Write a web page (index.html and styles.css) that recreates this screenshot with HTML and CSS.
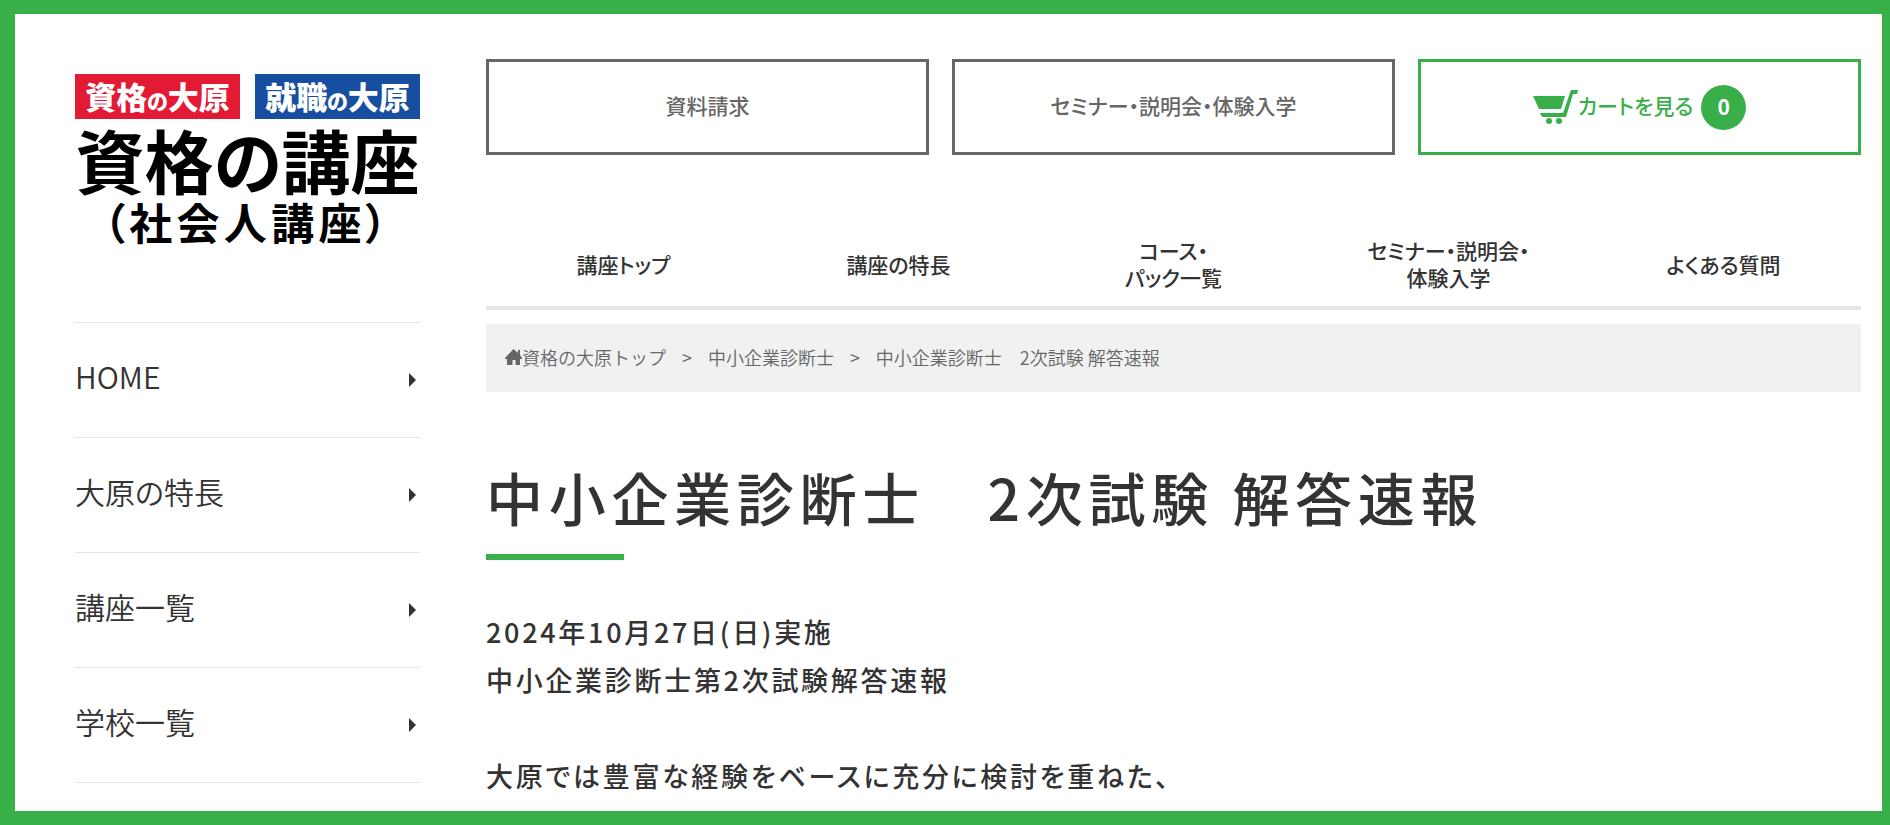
FILE: index.html
```html
<!DOCTYPE html>
<html lang="ja">
<head>
<meta charset="utf-8">
<meta name="viewport" content="width=device-width, initial-scale=1">
<title>中小企業診断士 2次試験 解答速報</title>
<link rel="stylesheet" href="styles.css">
</head>
<body>
<div class="page">
  <aside class="sidebar">
    <a class="logo" href="#">
      <span class="logo-tags">
        <span class="tag tag-red">資格<small>の</small>大原</span>
        <span class="tag tag-blue">就職<small>の</small>大原</span>
      </span>
      <span class="logo-name">資格の講座</span>
      <span class="logo-sub">（社会人講座）</span>
    </a>
    <nav class="side-nav">
      <a href="#"><span>HOME</span><i class="arrow"></i></a>
      <a href="#"><span>大原の特長</span><i class="arrow"></i></a>
      <a href="#"><span>講座一覧</span><i class="arrow"></i></a>
      <a href="#"><span>学校一覧</span><i class="arrow"></i></a>
    </nav>
  </aside>
  <main class="main">
    <div class="actions">
      <a class="action" href="#"><span class="label">資料請求</span></a>
      <a class="action" href="#"><span class="label">セミナー・説明会・体験入学</span></a>
      <a class="action action-cart" href="#">
        <svg class="cart" viewBox="0 0 45 35" aria-hidden="true">
          <path d="M0 6h32l-4 13H6z"/>
          <path d="M38 0h7l-1 4h-4l-7 23H9l-2-4h23z"/>
          <circle cx="16" cy="31" r="3"/><circle cx="26" cy="31" r="3"/>
        </svg>
        <span class="label">カートを見る</span>
        <span class="count">0</span>
      </a>
    </div>
    <nav class="course-nav">
      <a href="#">講座トップ</a>
      <a href="#">講座の特長</a>
      <a href="#">コース・<br>パック一覧</a>
      <a href="#">セミナー・説明会・<br>体験入学</a>
      <a href="#">よくある質問</a>
    </nav>
    <nav class="crumbs">
      <a class="crumb-home" href="#"><svg class="home" viewBox="0 0 17 16" aria-hidden="true"><path d="M0 9l8.500-9L13 4V1h2v5l2 3v1h-2v6h-4.500v-5h-3v5H2v-6H0z"/></svg>資格の大原トップ</a>
      <span>&gt;</span>
      <a href="#">中小企業診断士</a>
      <span>&gt;</span>
      <span>中小企業診断士　2次試験 解答速報</span>
    </nav>
    <article>
      <h1 class="title">中小企業診断士　2次試験 解答速報</h1>
      <p class="lead">2024年10月27日(日)実施<br>中小企業診断士第2次試験解答速報</p>
      <p class="lead">大原では豊富な経験をベースに充分に検討を重ねた、</p>
    </article>
  </main>
</div>
</body>
</html>
```
FILE: styles.css
```css
* { box-sizing: border-box; }
body {
  margin: 0;
  color: #333;
  font-family: "Noto Sans CJK JP", sans-serif;
  font-feature-settings: "palt";
}
a { color: inherit; text-decoration: none; }
.page {
  display: flex;
  gap: 66px;
  min-height: 100vh;
  padding: 45px 21px 0 60px;
  border: solid #39af49;
  border-width: 14px 8px 14px 15px;
  background: #fff;
}
.sidebar { flex: 0 0 345px; padding-top: 15px; }
.logo { display: block; color: #000; font-weight: 700; text-align: center; white-space: nowrap; }
.logo-tags { display: flex; gap: 15px; }
.tag {
  flex: 1;
  height: 45px;
  color: #fff;
  font-size: 31px;
  font-weight: 900;
  line-height: 43px;
}
.tag small { font-size: 21px; }
.tag-red { background: #e21a33; }
.tag-blue { background: #174e9f; }
.logo-name { display: block; font-size: 69px; line-height: 80px; }
.logo-sub { display: block; font-size: 43px; line-height: 44px; letter-spacing: 0.1em; }
.side-nav { margin-top: 79px; border-top: 1px solid #e5e5e5; }
.side-nav a {
  display: flex;
  align-items: center;
  justify-content: space-between;
  height: 115px;
  padding-right: 4px;
  border-bottom: 1px solid #e5e5e5;
  font-size: 30px;
  font-weight: 350;
}
.side-nav span { padding-bottom: 8px; }
.arrow { border: solid transparent; border-width: 7px 0 7px 7px; border-left-color: #333; }
.main { flex: 1; min-width: 0; }
.actions { display: grid; grid-template-columns: repeat(3, 1fr); gap: 23px; }
.action {
  display: flex;
  align-items: center;
  justify-content: center;
  height: 96px;
  border: 3px solid #666;
  color: #666;
  font-size: 21px;
  font-weight: 500;
}
.label { padding-bottom: 4px; }
.action-cart { border-color: #39af49; color: #39af49; }
.cart { width: 45px; height: 35px; fill: currentColor; }
.count {
  width: 45px;
  height: 45px;
  margin-left: 8px;
  border-radius: 50%;
  background: #39af49;
  color: #fff;
  font-weight: 700;
  line-height: 42px;
  text-align: center;
}
.course-nav {
  display: grid;
  grid-template-columns: repeat(5, 1fr);
  align-items: center;
  margin-top: 68px;
  padding: 14px 0 15px;
  border-bottom: 4px solid #e5e5e5;
  font-size: 21px;
  font-weight: 500;
  line-height: 27px;
  text-align: center;
}
.crumbs {
  display: flex;
  align-items: center;
  gap: 16px;
  height: 68px;
  margin-top: 14px;
  padding: 0 19px 2px;
  background: #f1f1f1;
  color: #666;
  font-size: 18px;
  font-weight: 350;
  font-feature-settings: normal;
}
.crumb-home { display: flex; align-items: center; }
.home { width: 17px; height: 16px; fill: currentColor; }
.title {
  margin: 64px 0 48px;
  font-size: 57px;
  font-weight: 500;
  line-height: 80px;
  letter-spacing: 0.1em;
}
.title::after {
  content: "";
  display: block;
  width: 138px;
  height: 6px;
  margin-top: 18px;
  background: #39af49;
}
.lead {
  margin: 0 0 48px;
  font-size: 27px;
  font-weight: 500;
  line-height: 48px;
  letter-spacing: 0.1em;
}
.lead:last-child { margin-bottom: 0; }
```
